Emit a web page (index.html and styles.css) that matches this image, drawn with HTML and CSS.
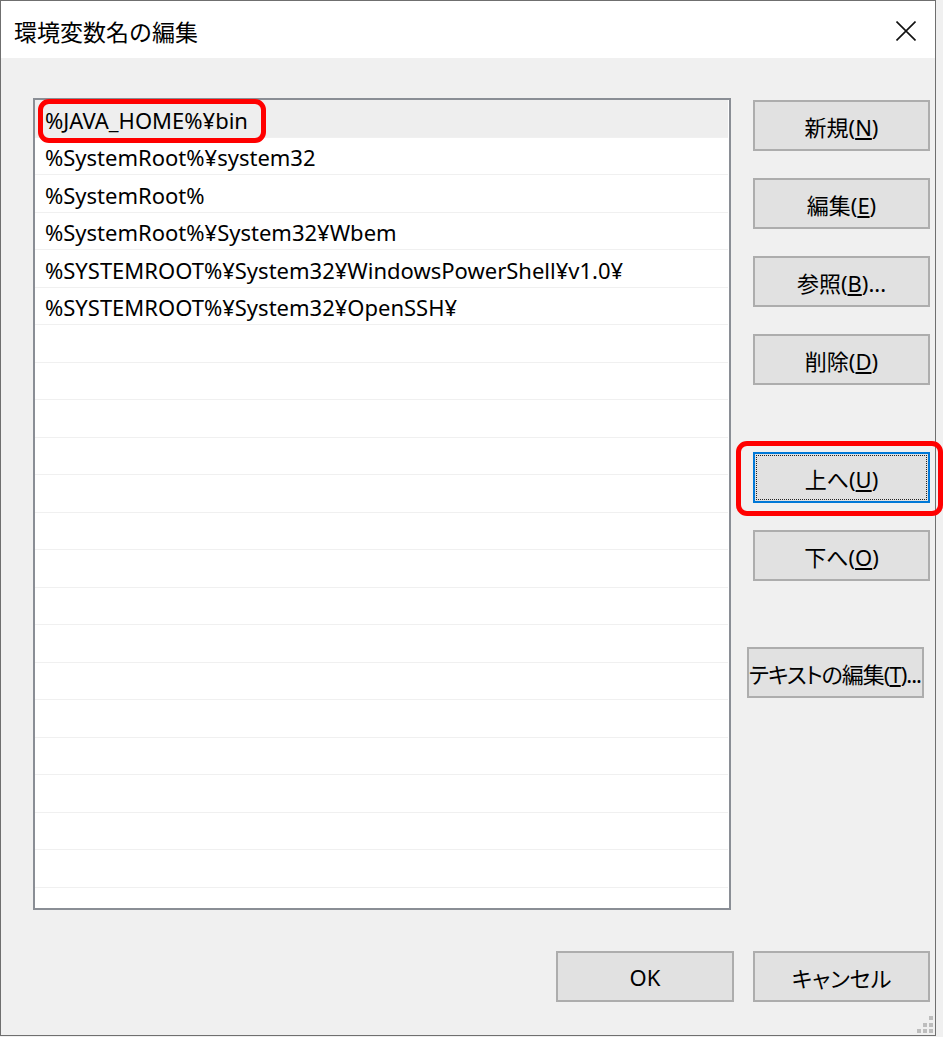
FILE: index.html
```html
<!DOCTYPE html>
<html lang="ja">
<head>
<meta charset="utf-8">
<title>環境変数名の編集</title>
<link rel="stylesheet" href="styles.css">
</head>
<body>
<div class="window">
  <div class="titlebar">
    <span class="title">環境変数名の編集</span>
    <svg class="close" width="20" height="20" viewBox="0 0 20 20" aria-label="閉じる">
      <path d="M0.5 0.5 L19.5 19.5 M19.5 0.5 L0.5 19.5" stroke="#111" stroke-width="1.6" fill="none"/>
    </svg>
  </div>
  <div class="body">
    <div class="main">
      <div class="list-wrap">
        <div class="list">
          <div class="row selected">%JAVA_HOME%¥bin</div>
          <div class="row">%SystemRoot%¥system32</div>
          <div class="row">%SystemRoot%</div>
          <div class="row">%SystemRoot%¥System32¥Wbem</div>
          <div class="row">%SYSTEMROOT%¥System32¥WindowsPowerShell¥v1.0¥</div>
          <div class="row">%SYSTEMROOT%¥System32¥OpenSSH¥</div>
          <div class="row"></div>
          <div class="row"></div>
          <div class="row"></div>
          <div class="row"></div>
          <div class="row"></div>
          <div class="row"></div>
          <div class="row"></div>
          <div class="row"></div>
          <div class="row"></div>
          <div class="row"></div>
          <div class="row"></div>
          <div class="row"></div>
          <div class="row"></div>
          <div class="row"></div>
          <div class="row"></div>
          <div class="row"></div>
        </div>
        <div class="mark mark-row"></div>
      </div>
      <div class="side">
        <button class="btn first">新規(<u>N</u>)</button>
        <button class="btn">編集(<u>E</u>)</button>
        <button class="btn">参照(<u>B</u>)...</button>
        <button class="btn">削除(<u>D</u>)</button>
        <div class="btn-wrap far">
          <button class="btn focused">上へ(<u>U</u>)</button>
          <div class="mark mark-btn"></div>
        </div>
        <button class="btn">下へ(<u>O</u>)</button>
        <button class="btn far shifted">テキストの編集(<u>T</u>)...</button>
      </div>
    </div>
    <div class="footer">
      <button class="btn ok">OK</button>
      <button class="btn">キャンセル</button>
    </div>
  </div>
  <svg class="grip" width="16" height="18" viewBox="0 0 16 18">
    <rect x="12" y="0" width="4" height="4" fill="#bdbdbd"/>
    <rect x="6" y="7" width="4" height="4" fill="#bdbdbd"/>
    <rect x="12" y="7" width="4" height="4" fill="#bdbdbd"/>
    <rect x="0" y="13" width="4" height="4" fill="#bdbdbd"/>
    <rect x="6" y="13" width="4" height="4" fill="#bdbdbd"/>
    <rect x="12" y="13" width="4" height="4" fill="#bdbdbd"/>
  </svg>
</div>
</body>
</html>
```

FILE: styles.css
```css
html, body {
  margin: 0;
  padding: 0;
}

body {
  background: #f0f0f0;
  font-family: "Noto Sans", "Noto Sans CJK JP", sans-serif;
  color: #000;
  width: 943px;
  height: 1037px;
  overflow: hidden;
}

.window {
  position: relative;
  box-sizing: border-box;
  width: 936px;
  height: 1036px;
  border: 1px solid #6f6f6f;
  background: #f0f0f0;
  display: flex;
  flex-direction: column;
}

.titlebar {
  height: 57px;
  flex: none;
  background: #fff;
  display: flex;
  align-items: center;
  justify-content: space-between;
  padding: 0 19px 0 13px;
}

.title {
  font-family: "Noto Sans CJK JP", sans-serif;
  font-size: 23px;
  padding-top: 3px;
  letter-spacing: 0;
}

.close {
  display: block;
  margin-top: 2px;
}

.body {
  flex: 1;
  padding: 40px 5px 0 32px;
  display: flex;
  flex-direction: column;
}

.main {
  display: flex;
  align-items: flex-start;
}

.list-wrap {
  position: relative;
  flex: none;
}

.list {
  box-sizing: border-box;
  width: 698px;
  height: 812px;
  border: 2px solid #8a8e95;
  background: #fff;
  overflow: hidden;
}

.row {
  box-sizing: border-box;
  height: 37.5px;
  border-bottom: 1px solid #f0f0f0;
  padding: 3px 0 0 10px;
  display: flex;
  align-items: center;
  font-size: 22px;
  white-space: nowrap;
  margin-right: 1px;
}

.row.selected {
  background: #eeeeee;
}

.mark {
  position: absolute;
  box-sizing: border-box;
  border: 5px solid #ff0000;
  border-radius: 11px;
  pointer-events: none;
}

.mark-row {
  left: 5px;
  top: 1px;
  width: 228px;
  height: 44px;
}

.side {
  margin-left: 22px;
  width: 177px;
  display: flex;
  flex-direction: column;
}

.btn {
  position: relative;
  box-sizing: border-box;
  width: 177px;
  height: 51px;
  margin: 27px 0 0 0;
  padding: 0;
  border: 2px solid #adadad;
  background: #e1e1e1;
  font-family: "Noto Sans", "Noto Sans CJK JP", sans-serif;
  font-feature-settings: "palt";
  font-size: 22px;
  color: #000;
  white-space: nowrap;
  text-align: center;
  overflow: visible;
}

.btn u {
  text-underline-offset: 2px;
}

.btn.first {
  margin-top: 2px;
}

.far {
  margin-top: 67px;
}

.btn.far {
  margin-top: 66px;
}

.btn.shifted {
  margin-left: -6px;
  letter-spacing: -1px;
  padding: 0 4px 0 0;
}

.btn-wrap {
  position: relative;
  height: 51px;
}

.btn-wrap .btn {
  margin: 0;
}

.btn.focused {
  border-color: #0078d7;
}

.btn.focused::after {
  content: "";
  position: absolute;
  inset: 1px;
  border: 1px dotted #222;
}

.mark-btn {
  left: -17px;
  top: -11px;
  width: 207px;
  height: 75px;
}

.footer {
  display: flex;
  justify-content: flex-end;
  gap: 19px;
  margin-top: 41px;
}

.footer .btn {
  margin: 0;
}

.footer .btn.ok {
  width: 178px;
}

.grip {
  position: absolute;
  right: 2px;
  bottom: 1px;
  display: block;
}
```
